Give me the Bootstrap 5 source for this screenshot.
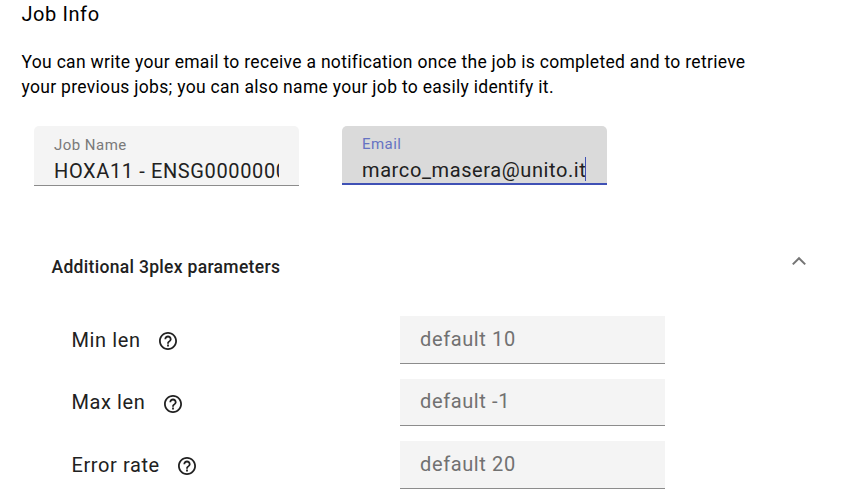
<!DOCTYPE html>
<html lang="en">
<head>
<meta charset="utf-8">
<meta name="viewport" content="width=device-width, initial-scale=1">
<title>Job Info</title>
<link href="https://cdn.jsdelivr.net/npm/bootstrap@5.3.0/dist/css/bootstrap.min.css" rel="stylesheet">
<style>
body{font-family:Roboto,sans-serif;color:#000;background:#fff;overflow:hidden}
.job-form{padding:0 21.5px;height:497px}
.section-title{font-size:20px;line-height:28px;letter-spacing:.58px;font-weight:400}
.intro{font-size:17.5px;line-height:25px;letter-spacing:.305px;margin-top:22px;width:760px}
.fields{margin:26px 0 0 12.5px;gap:43px}
.field{width:265px;height:60px;background:#f4f4f4;border-bottom:1px solid #8c8c8c;border-radius:5px 5px 0 0;padding:10px 20px 0}
.field label{display:block;font-size:15px;line-height:19px;letter-spacing:.47px;color:#7a7a7a}
.field .value{font-size:20px;line-height:28px;letter-spacing:.625px;color:#212121;height:29px;padding-top:2px}
.field.active{height:59px;background:#dadada;border-bottom:2px solid #3f51b5;padding-top:9px}
.field.active label{color:#6673c3}
.field.active .value{letter-spacing:.6px}
.caret{width:1px;height:24px;background:#3f51b5;margin:3px 0 0 -1.5px}
.panel-head{margin:66px 22.5px 0 30px;height:28px}
.panel-head h2{font-size:17.5px;line-height:28px;font-weight:500;letter-spacing:.31px;color:#212121;padding-top:1px}
.chevron{width:16px;height:10px;margin-top:4px}
.params{margin:36.1px 0 0 50px;gap:15px}
.param-name{width:328.5px;height:47.5px;font-size:20px;letter-spacing:.6px;line-height:28px;color:#212121}
.help{width:18px;height:18px;margin:3px 0 0 18.5px}
.param-input{width:265px;height:47.5px;background:#f4f4f4;border:0;border-bottom:1px solid #8c8c8c;border-radius:0;padding:0 20px 1px;font-size:20px;letter-spacing:.625px;line-height:28px}
.param-input::placeholder{color:#717171;opacity:1}
</style>
</head>
<body>
<svg class="d-none" xmlns="http://www.w3.org/2000/svg"><symbol id="help" viewBox="2 2 20 20"><path d="M11 18h2v-2h-2v2zm1-16C6.48 2 2 6.48 2 12s4.48 10 10 10 10-4.48 10-10S17.52 2 12 2zm0 18c-4.41 0-8-3.59-8-8s3.59-8 8-8 8 3.59 8 8-3.59 8-8 8zm0-14c-2.21 0-4 1.79-4 4h2c0-1.1.9-2 2-2s2 .9 2 2c0 2-3 1.75-3 5h2c0-2.25 3-2.5 3-5 0-2.21-1.79-4-4-4z"/></symbol></svg>
<main class="job-form">
  <h1 class="section-title mb-0">Job Info</h1>
  <p class="intro mb-0">You can write your email to receive a notification once the job is completed and to retrieve<br>your previous jobs; you can also name your job to easily identify it.</p>
  <div class="fields d-flex align-items-start">
    <div class="field">
      <label>Job Name</label>
      <div class="value overflow-hidden text-nowrap">HOXA11 - ENSG0000000</div>
    </div>
    <div class="field active">
      <label>Email</label>
      <div class="d-flex"><div class="value text-nowrap">marco_masera@unito.it</div><span class="caret"></span></div>
    </div>
  </div>
  <div class="panel-head d-flex justify-content-between">
    <h2 class="mb-0">Additional 3plex parameters</h2>
    <svg class="chevron" viewBox="0 0 16 10"><path d="M1.8 8.4 8 2.2l6.2 6.2" fill="none" stroke="#757575" stroke-width="2"/></svg>
  </div>
  <div class="params d-flex flex-column">
    <div class="d-flex"><div class="param-name d-flex align-items-center">Min len<svg class="help" fill="#212121"><use href="#help"/></svg></div><input class="param-input form-control" placeholder="default 10" aria-label="Min len"></div>
    <div class="d-flex"><div class="param-name d-flex align-items-center">Max len<svg class="help" fill="#212121"><use href="#help"/></svg></div><input class="param-input form-control" placeholder="default -1" aria-label="Max len"></div>
    <div class="d-flex"><div class="param-name d-flex align-items-center">Error rate<svg class="help" fill="#212121"><use href="#help"/></svg></div><input class="param-input form-control" placeholder="default 20" aria-label="Error rate"></div>
  </div>
</main>
<script src="https://cdn.jsdelivr.net/npm/bootstrap@5.3.0/dist/js/bootstrap.bundle.min.js"></script>
</body>
</html>
